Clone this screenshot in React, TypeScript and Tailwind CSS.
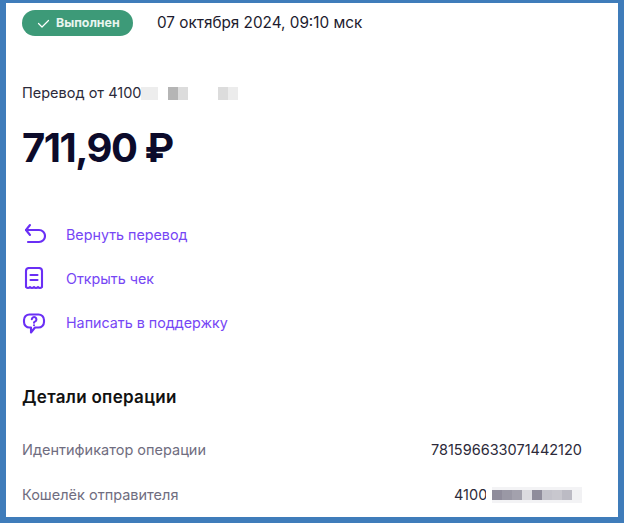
const FONT = "font-['Inter','Noto_Sans',sans-serif]"

function Blur({ w, color }: { w: string; color: string }) {
  return <span className={`inline-block h-[13px] ${w} ${color}`} />
}

function Cell({ w, color }: { w: string; color: string }) {
  return <span className={`block h-[10px] ${w} ${color}`} />
}

function ActionRow({ icon, label }: { icon: React.ReactNode; label: string }) {
  return (
    <div className="flex h-[44px] items-center">
      <div className="flex w-[44px] shrink-0 items-center">{icon}</div>
      <span className="text-[14.3px] text-[#7646f5]">{label}</span>
    </div>
  )
}

const stroke = {
  fill: "none",
  stroke: "#6a2ff5",
  strokeWidth: 2.1,
  strokeLinecap: "round" as const,
  strokeLinejoin: "round" as const,
}

export default function App() {
  return (
    <div className={`h-[523px] w-[624px] overflow-hidden border-[#3f7cba] border-t-[3px] border-r-[6px] border-b-[6px] border-l-[6px] bg-white ${FONT}`}>
      <div className="pl-[16px] pr-[36px]">
        <div className="mt-[7px] flex items-center">
          <div className="flex h-[26px] w-[111px] items-center rounded-full bg-[#3d9a78] pl-[15px]">
            <svg width="13" height="13" viewBox="0 0 13 13" {...stroke} stroke="#fff" strokeWidth={1.2}>
              <path d="M1.500 6.500l3.500 3.500 6.500-6.500" />
            </svg>
            <span className="ml-[6px] text-[12.400px] font-bold text-[#e8f5ef]">Выполнен</span>
          </div>
          <span className="ml-[24px] text-[15.300px] text-[#1d1b2e]">07 октября 2024, 09:10 мск</span>
        </div>

        <div className="mt-[45px] flex h-[24px] items-center text-[14.500px] text-[#2c2a3a]">
          <span>Перевод от 4100</span>
          <Blur w="w-[17px]" color="bg-[#ededed]" />
          <span className="w-[10px]" />
          <Blur w="w-[10px]" color="bg-[#b5b5b5]" />
          <Blur w="w-[10px]" color="bg-[#dcdcdc]" />
          <span className="w-[30px]" />
          <Blur w="w-[10px]" color="bg-[#dcdcdc]" />
          <Blur w="w-[10px]" color="bg-[#ececec]" />
        </div>

        <div className="mt-[18px] text-[40px] font-bold leading-[50px] tracking-[-1.5px] text-[#0c0b2b]">711,90 ₽</div>

        <div className="mt-[40px]">
          <ActionRow
            label="Вернуть перевод"
            icon={
              <svg width="24" height="24" viewBox="0 0 24 24" {...stroke}>
                <path d="M8 2L4 7l4 5" />
                <path d="M4 7h13a6 6 0 0 1 0 12H6" />
              </svg>
            }
          />
          <ActionRow
            label="Открыть чек"
            icon={
              <svg width="24" height="24" viewBox="0 0 24 24" {...stroke}>
                <path d="M4 20V4a3 3 0 0 1 3-3h10a3 3 0 0 1 3 3v16c-1.300 1.300-2.700 1.300-4 0-1.300 1.300-2.700 1.300-4 0-1.300 1.300-2.700 1.300-4 0-1.300 1.300-2.700 1.300-4 0z" />
                <path d="M8.500 8h7M8.500 13h7" />
              </svg>
            }
          />
          <ActionRow
            label="Написать в поддержку"
            icon={
              <svg width="24" height="24" viewBox="0 0 24 24" {...stroke}>
                <path d="M7.500 3.500h9a5.500 5.500 0 0 1 5.500 5.500v2a5.500 5.500 0 0 1-5.500 5.500H13l-4 5v-5H7.500A5.500 5.500 0 0 1 2 11V9a5.500 5.500 0 0 1 5.500-5.500z" />
                <path d="M9.800 8.300a2.300 2.300 0 1 1 3.400 2.100c-.8.400-1.200.8-1.200 1.300" />
                <path d="M12 14.200v.1" />
              </svg>
            }
          />
        </div>

        <h2 className="mt-[40px] text-[17px] font-semibold leading-[24px] tracking-[0.3px] text-[#111]">Детали операции</h2>

        <div className="mt-[29px] flex h-[24px] items-center justify-between text-[14.500px]">
          <span className="text-[#6f6d80]">Идентификатор операции</span>
          <span className="text-[#2c2a3a]">781596633071442120</span>
        </div>
        <div className="mt-[21px] flex h-[24px] items-center justify-between text-[14.500px]">
          <span className="text-[#6f6d80]">Кошелёк отправителя</span>
          <div className="flex items-center text-[#2c2a3a]">
            <span className="w-[32px] overflow-hidden">4100</span>
            <div className="ml-[6px] flex bg-[#f3f3f5] py-[3px]">
              <Cell w="w-[10px]" color="bg-[#8f8c9b]" />
              <Cell w="w-[10px]" color="bg-[#9a98a5]" />
              <Cell w="w-[10px]" color="bg-[#a3a1ad]" />
              <Cell w="w-[10px]" color="bg-[#dcdbe0]" />
              <Cell w="w-[10px]" color="bg-[#8f8c9b]" />
              <Cell w="w-[10px]" color="bg-[#c4c3cb]" />
              <Cell w="w-[10px]" color="bg-[#c8c7ce]" />
              <Cell w="w-[10px]" color="bg-[#bcbbc4]" />
              <Cell w="w-[10px]" color="bg-[#f1f1f3]" />
            </div>
          </div>
        </div>
      </div>
    </div>
  )
}
